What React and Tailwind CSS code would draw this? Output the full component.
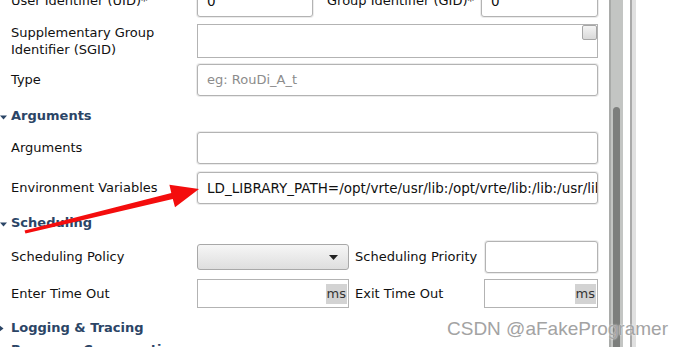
import React from "react";

const font = { fontFamily: '"DejaVu Sans", sans-serif' };

function Tri({ open }) {
  return open ? (
    <svg width="7" height="5" viewBox="0 0 7 5" className="absolute left-[0px] top-[11px]">
      <polygon points="0,0.5 7,0.5 3.5,4.5" fill="#2b4566" />
    </svg>
  ) : (
    <svg width="5" height="7" viewBox="0 0 5 7" className="absolute left-[-1px] top-[9px]">
      <polygon points="0,0 4.5,3.5 0,7" fill="#2b4566" />
    </svg>
  );
}

function Header({ children, open = true, mt }) {
  return (
    <div className={`relative h-[20px] pt-[4px] flex items-center pl-[11px] font-bold text-[13px] text-[#2b4566] ${mt}`}>
      <Tri open={open} />
      <span>{children}</span>
    </div>
  );
}

function Input({ w, children, placeholder, rounded = true, h = "h-full" }) {
  return (
    <div
      className={`${w} ${h} bg-white border border-[#b3b3b3] ${rounded ? "rounded-[3px] shadow-[0_0_0_1px_#ececec]" : ""} flex items-center pl-[9px] overflow-hidden whitespace-nowrap text-[13.5px] text-[#111]`}
    >
      {placeholder ? <span className="text-[#8c8c8c] text-[13px]">{placeholder}</span> : children}
    </div>
  );
}

function MsInput({ w }) {
  return (
    <div className={`${w} h-full bg-white border border-[#b3b3b3] flex items-center justify-end pr-[1px]`}>
      <span className="bg-[#d3d3d3] h-[20px] px-[1px] flex items-center text-[13px] text-[#333]">ms</span>
    </div>
  );
}

export default function App() {
  return (
    <div className="relative w-[677px] h-[347px] bg-white overflow-hidden text-[#111]" style={font}>
      <div className="flex h-full">
        {/* main form */}
        <div className="w-[609px] -mt-[15px] text-[13px]">
          {/* UID / GID */}
          <div className="flex items-center h-[32px]">
            <div className="w-[197px] pl-[11px]">User Identifier (UID)*</div>
            <Input w="w-[116px]">0</Input>
            <div className="w-[168px] pl-[14px] whitespace-nowrap">Group Identifier (GID)*</div>
            <Input w="w-[117px]">0</Input>
          </div>
          {/* SGID */}
          <div className="flex items-center h-[34px] mt-[7px]">
            <div className="w-[197px] pl-[11px] leading-[17px]">
              Supplementary Group
              <br />
              Identifier (SGID)
            </div>
            <div className="relative w-[401px] h-full bg-white border border-[#b3b3b3]">
              <div className="absolute right-[0px] top-[0px] w-[15px] h-[15px] rounded-[2px] border border-[#a6a6a6] bg-gradient-to-b from-[#f4f4f4] to-[#d9d9d9]" />
            </div>
          </div>
          {/* Type */}
          <div className="flex items-center h-[32px] mt-[6px]">
            <div className="w-[197px] pl-[11px]">Type</div>
            <Input w="w-[401px]" placeholder="eg: RouDi_A_t" />
          </div>

          <Header mt="mt-[8px]">Arguments</Header>

          <div className="flex items-center h-[32px] mt-[8px]">
            <div className="w-[197px] pl-[11px]">Arguments</div>
            <Input w="w-[401px]" />
          </div>
          <div className="flex items-center h-[32px] mt-[8px]">
            <div className="w-[197px] pl-[11px]">Environment Variables</div>
            <Input w="w-[401px]">LD_LIBRARY_PATH=/opt/vrte/usr/lib:/opt/vrte/lib:/lib:/usr/lib</Input>
          </div>

          <Header mt="mt-[7px]">Scheduling</Header>

          <div className="flex items-center h-[32px] mt-[10px]">
            <div className="w-[197px] pl-[11px]">Scheduling Policy</div>
            <div className="w-[152px] h-[26px] rounded-[3px] border border-[#a8a8a8] bg-gradient-to-b from-[#f6f6f6] to-[#dedede] flex items-center justify-end pr-[10px]">
              <svg width="9" height="5" viewBox="0 0 9 5">
                <polygon points="0,0 9,0 4.5,5" fill="#222" />
              </svg>
            </div>
            <div className="w-[136px] pl-[6px] whitespace-nowrap">Scheduling Priority</div>
            <Input w="w-[113px]" />
          </div>
          <div className="flex items-center h-[29px] mt-[6px]">
            <div className="w-[197px] pl-[11px]">Enter Time Out</div>
            <MsInput w="w-[152px]" />
            <div className="w-[135px] pl-[6px] whitespace-nowrap">Exit Time Out</div>
            <MsInput w="w-[114px]" />
          </div>

          <Header open={false} mt="mt-[8px]">Logging &amp; Tracing</Header>
          <Header open={false} mt="mt-[2px]">Resource Consumption</Header>
        </div>

        {/* scrollbar */}
        <div className="relative w-[14px] h-full border-l-2 border-[#a9aba9] bg-[#c3c5c3]">
          <div className="absolute left-[2px] top-[107px] w-[7px] h-[260px] rounded-t-[4px] bg-[#7c7e7c]" />
        </div>
        <div className="w-[7px] h-full bg-white" />
        <div className="w-[2px] h-full bg-[#a9a9a9]" />
        <div className="w-[4px] h-full bg-[#e0e0e0]" />
        <div className="flex-1 h-full bg-white" />
      </div>

      {/* red arrow annotation */}
      <svg className="absolute left-0 top-0" width="677" height="347" viewBox="0 0 677 347">
        <polygon
          points="24.5,230.6 171.3,193.1 169.4,184.8 199,189 175,207.2 172.8,199 25.5,233.4"
          fill="#f40d0d"
        />
      </svg>

      {/* watermark */}
      <div className="absolute left-[447px] top-[315px] text-[19px] text-[#a3a3a3] whitespace-nowrap" style={{ fontFamily: '"Liberation Sans", sans-serif', textShadow: "0 0 2px #fff" }}>
        CSDN @aFakeProgramer
      </div>
    </div>
  );
}
